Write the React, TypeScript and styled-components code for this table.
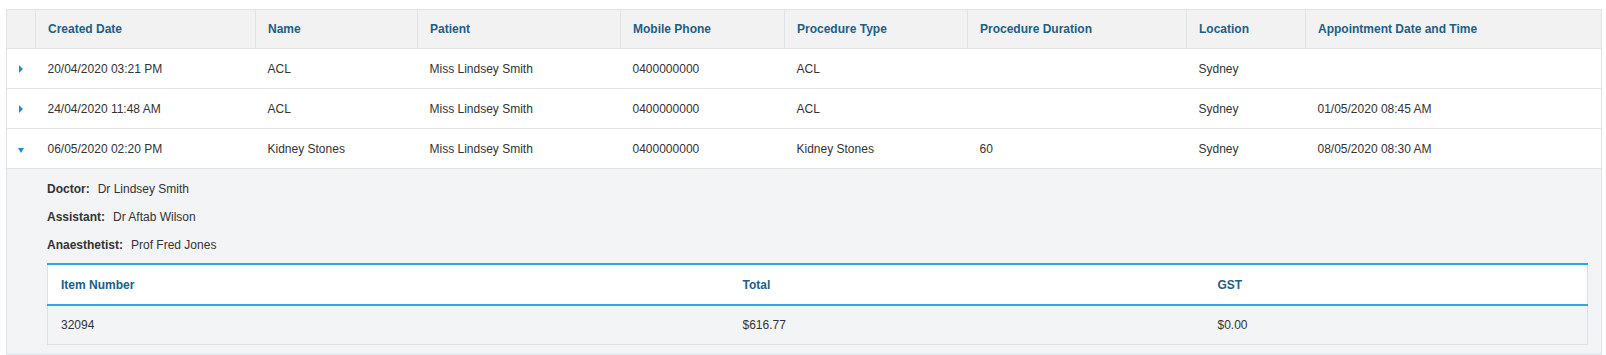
import { Fragment } from 'react'
import styled, { createGlobalStyle } from 'styled-components'

const GlobalStyle = createGlobalStyle`
  body {
    margin: 0;
    background: #fff;
    font-family: "Liberation Sans", Arial, sans-serif;
    font-size: 12px;
    color: #333;
  }
  th, td {
    box-sizing: border-box;
  }
`

const Page = styled.div`
  padding: 9px 4px 0 6px;
`

const Grid = styled.table`
  width: 1596px;
  border-collapse: collapse;
  table-layout: fixed;
  border: 1px solid #dde3ea;
`

const HeadCell = styled.th<{ $w?: number }>`
  width: ${(p) => (p.$w ? `${p.$w}px` : 'auto')};
  height: 39px;
  padding: 0 12px;
  background: #f2f2f2;
  border-left: 1px solid #dde3ea;
  border-bottom: 1px solid #dde3ea;
  color: #1c5f87;
  font-weight: bold;
  text-align: left;
  white-space: nowrap;
  &:first-child {
    border-left: none;
  }
`

const Row = styled.tr`
  background: #fff;
  border-bottom: 1px solid #dde3ea;
`

const Cell = styled.td`
  height: 40px;
  padding: 0 12px;
  white-space: nowrap;
`

const ToggleCell = styled.td`
  padding: 0 0 0 11px;
`

const Arrow = styled.span<{ $open?: boolean }>`
  display: inline-block;
  width: 0;
  height: 0;
  ${(p) =>
    p.$open
      ? `border-left: 3.5px solid transparent;
         border-right: 3.5px solid transparent;
         border-top: 5px solid #1f8fcf;
         margin-top: 4px;`
      : `border-top: 4px solid transparent;
         border-bottom: 4px solid transparent;
         border-left: 4px solid #1f8fcf;
         margin-left: 1px;
         margin-top: 4px;`}
`

const DetailRow = styled.tr`
  background: #f3f4f6;
`

const DetailCell = styled.td`
  padding: 6px 13px 9px 40px;
`

const Field = styled.div`
  display: flex;
  gap: 8px;
  height: 28px;
  align-items: center;
`

const Label = styled.span`
  font-weight: bold;
`

const ItemTable = styled.table`
  width: 100%;
  margin-top: 4px;
  border-collapse: collapse;
  table-layout: fixed;
  border-left: 1px solid #dcdfe3;
  border-right: 1px solid #dcdfe3;
  border-bottom: 1px solid #dcdfe3;
`

const ItemHead = styled.th<{ $w?: number }>`
  width: ${(p) => (p.$w ? `${p.$w}px` : 'auto')};
  height: 41px;
  padding: 0 13px;
  background: #fff;
  border-top: 2px solid #29abe2;
  border-bottom: 2px solid #29abe2;
  color: #1c5f87;
  font-weight: bold;
  text-align: left;
`

const ItemCell = styled.td`
  height: 39px;
  padding: 0 13px;
  background: #f3f4f6;
`

const rows = [
  {
    created: '20/04/2020 03:21 PM',
    name: 'ACL',
    patient: 'Miss Lindsey Smith',
    phone: '0400000000',
    type: 'ACL',
    duration: '',
    location: 'Sydney',
    appointment: '',
  },
  {
    created: '24/04/2020 11:48 AM',
    name: 'ACL',
    patient: 'Miss Lindsey Smith',
    phone: '0400000000',
    type: 'ACL',
    duration: '',
    location: 'Sydney',
    appointment: '01/05/2020 08:45 AM',
  },
  {
    created: '06/05/2020 02:20 PM',
    name: 'Kidney Stones',
    patient: 'Miss Lindsey Smith',
    phone: '0400000000',
    type: 'Kidney Stones',
    duration: '60',
    location: 'Sydney',
    appointment: '08/05/2020 08:30 AM',
    open: true,
  },
]

export default function App() {
  return (
    <Page>
      <GlobalStyle />
      <Grid>
        <thead>
          <tr>
            <HeadCell $w={29} />
            <HeadCell $w={220}>Created Date</HeadCell>
            <HeadCell $w={162}>Name</HeadCell>
            <HeadCell $w={203}>Patient</HeadCell>
            <HeadCell $w={164}>Mobile Phone</HeadCell>
            <HeadCell $w={183}>Procedure Type</HeadCell>
            <HeadCell $w={219}>Procedure Duration</HeadCell>
            <HeadCell $w={119}>Location</HeadCell>
            <HeadCell>Appointment Date and Time</HeadCell>
          </tr>
        </thead>
        <tbody>
          {rows.map((r) => (
            <Fragment key={r.created}>
              <Row>
                <ToggleCell>
                  <Arrow $open={r.open} />
                </ToggleCell>
                <Cell>{r.created}</Cell>
                <Cell>{r.name}</Cell>
                <Cell>{r.patient}</Cell>
                <Cell>{r.phone}</Cell>
                <Cell>{r.type}</Cell>
                <Cell>{r.duration}</Cell>
                <Cell>{r.location}</Cell>
                <Cell>{r.appointment}</Cell>
              </Row>
              {r.open && (
                <DetailRow>
                  <DetailCell colSpan={9}>
                    <Field>
                      <Label>Doctor:</Label>
                      <span>Dr Lindsey Smith</span>
                    </Field>
                    <Field>
                      <Label>Assistant:</Label>
                      <span>Dr Aftab Wilson</span>
                    </Field>
                    <Field>
                      <Label>Anaesthetist:</Label>
                      <span>Prof Fred Jones</span>
                    </Field>
                    <ItemTable>
                      <thead>
                        <tr>
                          <ItemHead $w={682}>Item Number</ItemHead>
                          <ItemHead $w={475}>Total</ItemHead>
                          <ItemHead>GST</ItemHead>
                        </tr>
                      </thead>
                      <tbody>
                        <tr>
                          <ItemCell>32094</ItemCell>
                          <ItemCell>$616.77</ItemCell>
                          <ItemCell>$0.00</ItemCell>
                        </tr>
                      </tbody>
                    </ItemTable>
                  </DetailCell>
                </DetailRow>
              )}
            </Fragment>
          ))}
        </tbody>
      </Grid>
    </Page>
  )
}
